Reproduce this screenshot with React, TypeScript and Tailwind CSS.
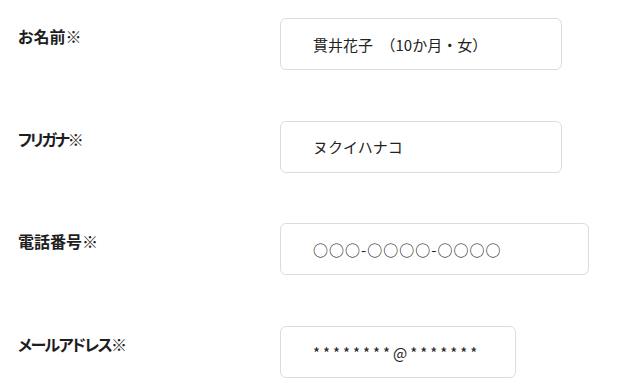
const rows = [
  { label: "お名前※", labelTrack: "tracking-normal", value: "貫井花子　（10か月・女）", width: "w-[282px]", track: "tracking-normal" },
  { label: "フリガナ※", labelTrack: "tracking-[-2px]", value: "ヌクイハナコ", width: "w-[282px]", track: "tracking-normal" },
  { label: "電話番号※", labelTrack: "tracking-normal", value: "○○○-○○○○-○○○○", width: "w-[309px]", track: "tracking-[1px]" },
  { label: "メールアドレス※", labelTrack: "tracking-[-1.6px]", value: "********@*******", width: "w-[236px]", track: "tracking-[3px]" },
];

export default function App() {
  return (
    <div className="min-h-screen bg-white pt-[18px] pl-[18px] font-['Noto_Sans_CJK_JP',sans-serif]">
      <div className="flex flex-col gap-[50.7px]">
        {rows.map((row) => (
          <div key={row.label} className="flex">
            <div
              className={`w-[262px] shrink-0 pt-[6px] text-[16px] leading-[24px] font-bold text-[#1e1e1e] [font-feature-settings:'palt'] ${row.labelTrack}`}
            >
              {row.label}
            </div>
            <div
              className={`${row.width} h-[52px] flex items-center pl-[32px] pt-[2px] border border-[#dcdcdc] rounded-[6px] bg-white text-[15px] text-[#222] ${row.track}`}
            >
              {row.value}
            </div>
          </div>
        ))}
      </div>
    </div>
  );
}
